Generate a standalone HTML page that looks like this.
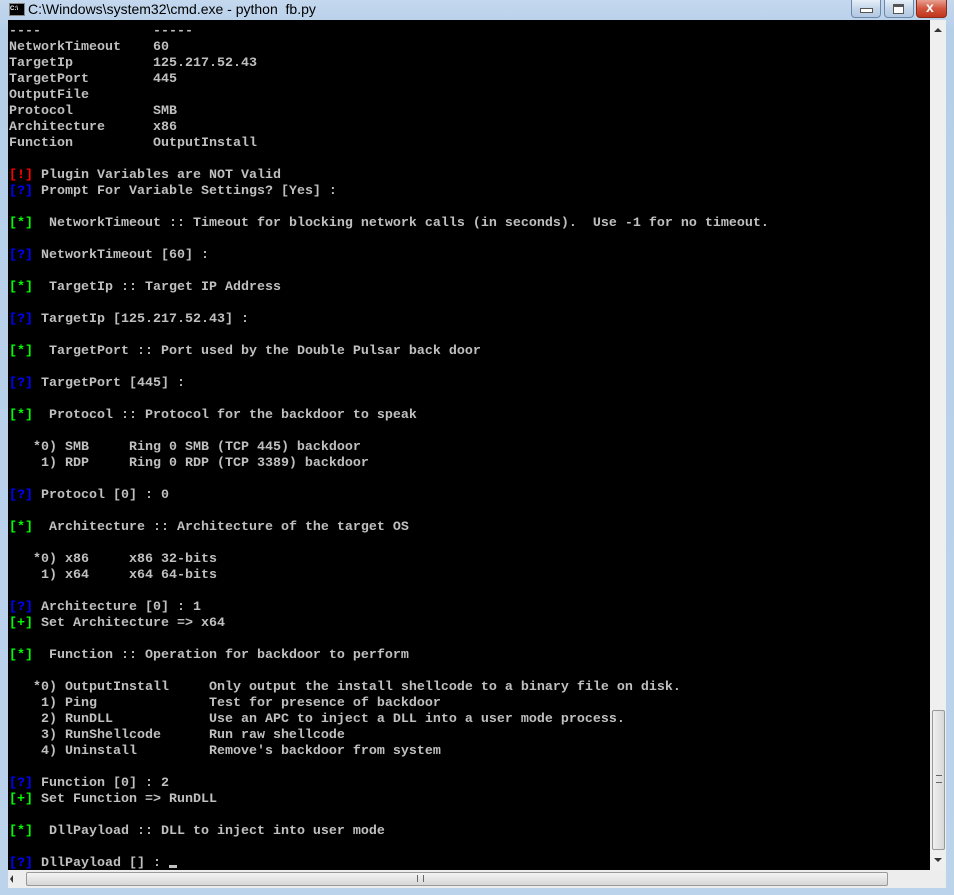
<!DOCTYPE html>
<html><head><meta charset="utf-8"><style>
html,body{margin:0;padding:0;width:954px;height:895px;overflow:hidden;background:#b9d1ea;}
#win{position:absolute;left:0;top:0;width:954px;height:895px;background:linear-gradient(#c4d8ee,#b6cfe9 30px,#bcd3ec);}
#title{position:absolute;left:28px;top:0px;font:14px "Liberation Sans",sans-serif;color:#000;line-height:18px;}
#icon{position:absolute;left:9px;top:3px;width:14px;height:11px;background:#000;border:1px solid #888;font:bold 6px "Liberation Sans",sans-serif;color:#fff;line-height:10px;}
.btn{position:absolute;top:0;height:17px;border:1px solid #6d87a8;border-top:none;border-radius:0 0 4px 4px;background:linear-gradient(#e6eef8,#c5d6ea 50%,#b3c8e2);}
#console{position:absolute;left:8px;top:20px;width:922px;height:850px;background:#000;overflow:hidden;}
pre{position:absolute;left:1px;top:4px;margin:0;font:bold 13.333px/16px "Liberation Mono",monospace;color:#c0c0c0;white-space:pre;}
.r{color:#ff0000}.b{color:#0000ff}.g{color:#00ff00}
#vs{position:absolute;left:930px;top:20px;width:16px;height:850px;background:#efefef;}
#thumb{position:absolute;left:932px;top:710px;width:13px;height:140px;border:1px solid #999;border-radius:2px;background:linear-gradient(90deg,#f0f0f0,#d8d8d8);box-sizing:border-box;}
#hs{position:absolute;left:8px;top:870px;width:938px;height:18px;background:#ededed;}
#hthumb{position:absolute;left:26px;top:872px;width:862px;height:14px;border:1px solid #999;border-radius:2px;background:linear-gradient(#f4f4f4,#d6d6d6);box-sizing:border-box;}
</style></head><body>
<div id="win">
<div id="icon">C:\</div>
<div id="title">C:\Windows\system32\cmd.exe - python&nbsp; fb.py</div>
<div class="btn" style="left:851px;width:28px;"><div style="position:absolute;left:8px;top:8px;width:11px;height:3px;background:#fff;border:1px solid #555;"></div></div>
<div class="btn" style="left:884px;width:28px;"><div style="position:absolute;left:8px;top:4px;width:9px;height:6px;border:1px solid #555;border-top:3px solid #555;background:#fff;"></div></div>
<div class="btn" style="left:916px;width:29px;background:linear-gradient(#e8a091,#d2553e 50%,#c0341c);border-color:#8b2a1a;"><div style="position:absolute;left:9px;top:-1px;color:#fff;font:bold 14px 'Liberation Sans',sans-serif;">x</div></div>
<div id="console"><pre>----              -----
NetworkTimeout    60
TargetIp          125.217.52.43
TargetPort        445
OutputFile
Protocol          SMB
Architecture      x86
Function          OutputInstall

<span class="r">[!]</span> Plugin Variables are NOT Valid
<span class="b">[?]</span> Prompt For Variable Settings? [Yes] :

<span class="g">[*]</span>  NetworkTimeout :: Timeout for blocking network calls (in seconds).  Use -1 for no timeout.

<span class="b">[?]</span> NetworkTimeout [60] :

<span class="g">[*]</span>  TargetIp :: Target IP Address

<span class="b">[?]</span> TargetIp [125.217.52.43] :

<span class="g">[*]</span>  TargetPort :: Port used by the Double Pulsar back door

<span class="b">[?]</span> TargetPort [445] :

<span class="g">[*]</span>  Protocol :: Protocol for the backdoor to speak

   *0) SMB     Ring 0 SMB (TCP 445) backdoor
    1) RDP     Ring 0 RDP (TCP 3389) backdoor

<span class="b">[?]</span> Protocol [0] : 0

<span class="g">[*]</span>  Architecture :: Architecture of the target OS

   *0) x86     x86 32-bits
    1) x64     x64 64-bits

<span class="b">[?]</span> Architecture [0] : 1
<span class="g">[+]</span> Set Architecture =&gt; x64

<span class="g">[*]</span>  Function :: Operation for backdoor to perform

   *0) OutputInstall     Only output the install shellcode to a binary file on disk.
    1) Ping              Test for presence of backdoor
    2) RunDLL            Use an APC to inject a DLL into a user mode process.
    3) RunShellcode      Run raw shellcode
    4) Uninstall         Remove's backdoor from system

<span class="b">[?]</span> Function [0] : 2
<span class="g">[+]</span> Set Function =&gt; RunDLL

<span class="g">[*]</span>  DllPayload :: DLL to inject into user mode

<span class="b">[?]</span> DllPayload [] : <span style="display:inline-block;width:8px;height:3px;background:#c0c0c0;vertical-align:-2px"></span></pre></div>
<div id="vs"></div>
<div style="position:absolute;left:934px;top:28px;width:0;height:0;border-left:4px solid transparent;border-right:4px solid transparent;border-bottom:4px solid #333;"></div>
<div id="thumb"><div style="position:absolute;left:3px;top:64px;width:6px;height:6px;border-top:1px solid #666;border-bottom:1px solid #666;"></div></div>
<div style="position:absolute;left:934px;top:858px;width:0;height:0;border-left:4px solid transparent;border-right:4px solid transparent;border-top:4px solid #333;"></div>
<div id="hs"></div>
<div style="position:absolute;left:10px;top:875px;width:0;height:0;border-top:4px solid transparent;border-bottom:4px solid transparent;border-right:3px solid #333;"></div>
<div id="hthumb"><div style="position:absolute;left:390px;top:2px;width:5px;height:7px;border-left:1px solid #666;border-right:1px solid #666;"></div></div>
<div style="position:absolute;left:930px;top:870px;width:16px;height:18px;background:#ededed;"></div>
</div>
</body></html>
